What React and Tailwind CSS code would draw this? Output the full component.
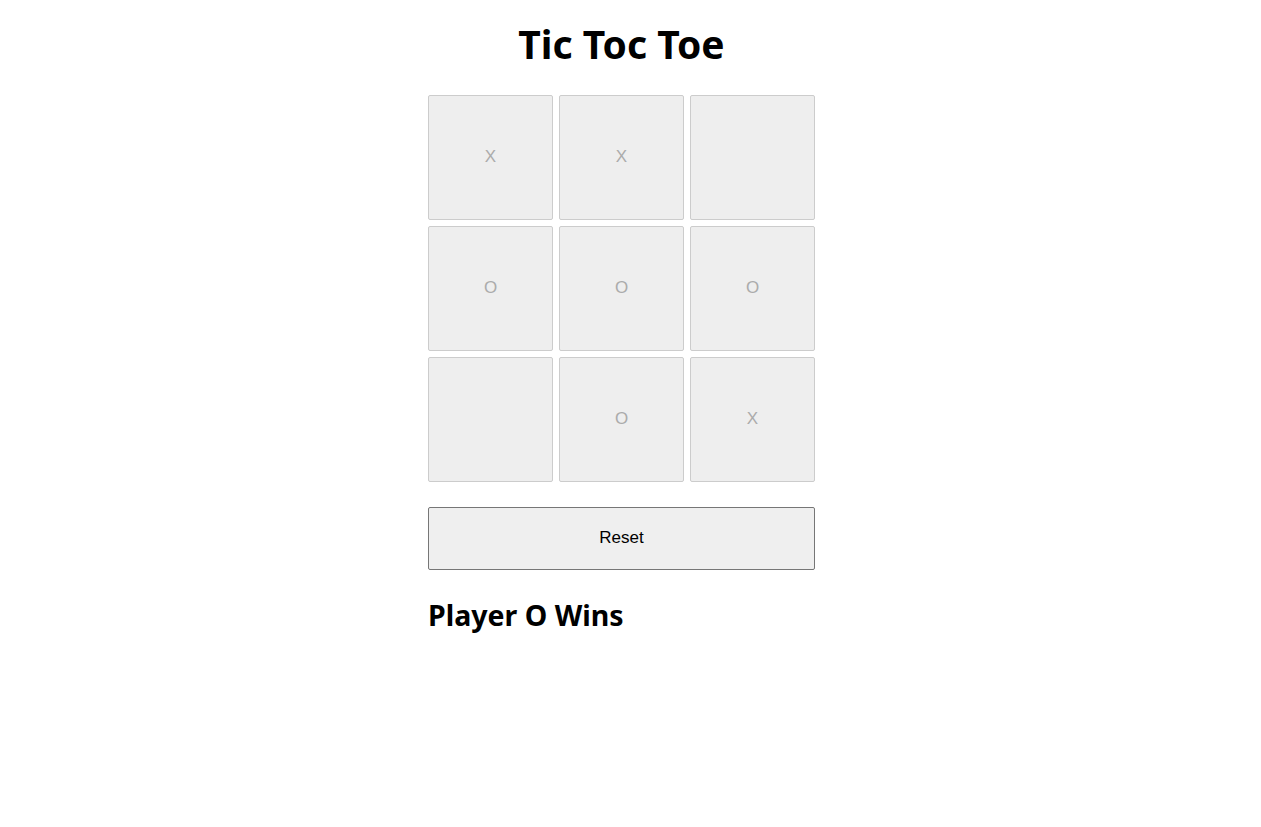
export default function App() {
  const board = ["X", "X", "", "O", "O", "O", "", "O", "X"];
  return (
    <div className="flex flex-col items-center bg-white min-h-[827px] pr-[18px]" style={{ fontFamily: "'Noto Sans', sans-serif" }}>
      <h1 className="text-[39px] font-bold leading-none mt-[24px] text-black">Tic Toc Toe</h1>
      <div className="w-[387px] mt-[32px]">
        <div className="grid grid-cols-3 gap-[6px]">
          {board.map((v, i) => (
            <div
              key={i}
              className="h-[125px] flex items-center justify-center pb-[2px] bg-[#eeeeee] border border-[#cccccc] rounded-[2px] text-[17px] text-[#ababab]"
              style={{ fontFamily: "'Liberation Sans', Arial, sans-serif" }}
            >
              {v}
            </div>
          ))}
        </div>
        <button
          className="mt-[25px] w-full h-[63px] pb-[2px] bg-[#efefef] border border-[#767676] rounded-[2px] text-[17px] text-black"
          style={{ fontFamily: "'Liberation Sans', Arial, sans-serif" }}
        >
          Reset
        </button>
        <h2 className="mt-[31px] text-[28.5px] font-bold leading-none text-black">Player O Wins</h2>
      </div>
    </div>
  );
}
